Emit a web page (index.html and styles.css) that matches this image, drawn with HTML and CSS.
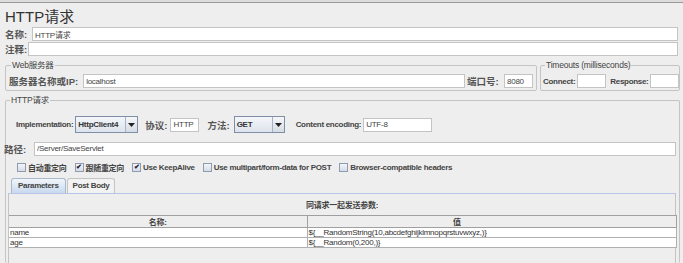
FILE: index.html
```html
<!DOCTYPE html>
<html>
<head>
    <meta charset="utf-8">
    <title>HTTP请求</title>
    <link rel="stylesheet" href="styles.css">
</head>
<body>
    <div class="topbar"></div>
    <h1 class="title">HTTP请求</h1>

    <!-- name / comment -->
    <div class="row name-row">
        <label class="lbl cjk">名称:</label>
        <input class="field grow" type="text" value="HTTP请求">
    </div>
    <div class="row comment-row">
        <label class="lbl cjk">注释:</label>
        <input class="field grow" type="text" value="">
    </div>

    <!-- server + timeouts -->
    <div class="server-line">
        <fieldset class="box web">
            <legend>Web服务器</legend>
            <div class="row">
                <label class="lbl cjk">服务器名称或IP:</label>
                <input class="field grow host" type="text" value="localhost">
                <label class="lbl cjk port-lbl">端口号:</label>
                <input class="field port" type="text" value="8080">
            </div>
        </fieldset>
        <fieldset class="box timeouts">
            <legend>Timeouts (milliseconds)</legend>
            <div class="row">
                <label class="lbl">Connect:</label>
                <input class="field tiny" type="text" value="">
                <label class="lbl resp-lbl">Response:</label>
                <input class="field tiny" type="text" value="">
            </div>
        </fieldset>
    </div>

    <!-- http request -->
    <fieldset class="box http">
        <legend>HTTP请求</legend>

        <div class="row impl-row">
            <label class="lbl">Implementation:</label>
            <div class="combo impl">
                <span class="combo-text">HttpClient4</span>
                <span class="combo-btn">
                    <svg width="7" height="4" viewBox="0 0 7 4"><path d="M0 0h7L3.5 4z" fill="#222"/></svg>
                </span>
            </div>
            <label class="lbl cjk proto-lbl">协议:</label>
            <input class="field proto" type="text" value="HTTP">
            <label class="lbl cjk method-lbl">方法:</label>
            <div class="combo method">
                <span class="combo-text">GET</span>
                <span class="combo-btn">
                    <svg width="7" height="4" viewBox="0 0 7 4"><path d="M0 0h7L3.5 4z" fill="#222"/></svg>
                </span>
            </div>
            <label class="lbl enc-lbl">Content encoding:</label>
            <input class="field enc" type="text" value="UTF-8">
        </div>

        <div class="row path-row">
            <label class="lbl cjk">路径:</label>
            <input class="field grow" type="text" value="/Server/SaveServlet">
        </div>

        <div class="row checks">
            <span class="check"><span class="cb"></span>自动重定向</span>
            <span class="check"><span class="cb on">&#10004;</span>跟随重定向</span>
            <span class="check"><span class="cb on">&#10004;</span>Use KeepAlive</span>
            <span class="check"><span class="cb"></span>Use multipart/form-data for POST</span>
            <span class="check"><span class="cb"></span>Browser-compatible headers</span>
        </div>

        <div class="tabs">
            <span class="tab active">Parameters</span>
            <span class="tab">Post Body</span>
        </div>
        <div class="panel">
            <div class="caption">同请求一起发送参数:</div>
            <table class="params">
                <tr>
                    <th class="col-name">名称:</th>
                    <th class="col-value">值</th>
                </tr>
                <tr>
                    <td>name</td>
                    <td>${__RandomString(10,abcdefghijklmnopqrstuvwxyz,)}</td>
                </tr>
                <tr>
                    <td>age</td>
                    <td>${__Random(0,200,)}</td>
                </tr>
            </table>
        </div>
    </fieldset>
</body>
</html>
```

FILE: styles.css
```css
:root {
    --panel:   #eeeeee;
    --line:    #c4c4c4;
    --text:    #222222;
    --soft:    #444444;
    --blue:    #b8c4e8;
}

* {
    box-sizing: border-box;
}

body {
    margin: 0;
    width: 683px;
    height: 263px;
    overflow: hidden;

    color: var( --text );
    background-color: var( --panel );
    font-family: "Liberation Sans", "Noto Sans CJK SC", sans-serif;
    font-size: 8px;
    letter-spacing: -0.25px;
}

.topbar {
    height: 3px;
    border-bottom: 1px solid #9a9a9a;
    background-color: #dcdcdc;
}

.title {
    margin: 0;
    padding: 5px 0 0 5px;
    height: 24px;

    font-size: 15px;
    line-height: 17px;
    font-weight: normal;
    letter-spacing: 0;
    color: #333;
}

.row {
    display: flex;
    align-items: center;
}

.lbl {
    font-weight: bold;
    letter-spacing: -0.3px;
    color: var( --soft );
    white-space: nowrap;
}

.lbl.cjk {
    font-size: 9.5px;
    letter-spacing: 0;
    color: #555;
}

.field {
    height: 14px;
    padding: 0 2px;

    font-family: inherit;
    font-size: 8px;
    letter-spacing: -0.25px;
    color: var( --soft );

    background: #fff;
    border: 1px solid var( --line );
    outline: none;
}

.grow {
    flex: 1;
    min-width: 0;
}

.name-row {
    padding: 0 5px 0 5px;
    height: 14px;
}

.name-row .lbl {
    width: 27px;
}

.comment-row {
    margin-top: 1px;
    padding: 0 5px 0 5px;
    height: 14px;
}

.comment-row .lbl {
    width: 23px;
}

/* group boxes */
.box {
    margin: 0;
    padding: 0 3px 0 3px;
    border: 1px solid var( --line );
    border-radius: 2px;
    min-width: 0;
}

.box legend {
    padding: 0 1px;
    margin-left: 2px;
    line-height: 10px;
    font-size: 8.5px;
    letter-spacing: -0.2px;
    color: var( --soft );
}

.server-line {
    display: flex;
    gap: 3px;
    margin: 4px 3px 0 5px;
    height: 31px;
}

.web {
    flex: 1;
    padding-bottom: 1px;
}

.web .row {
    margin-top: 4px;
}

.web .host {
    margin-left: 5px;
    margin-right: 2px;
}

.port-lbl {
    width: 37px;
}

.port {
    width: 29px;
}

.timeouts {
    width: 140px;
    padding-left: 2px;
    padding-bottom: 1px;
}

.timeouts .row {
    margin-top: 4px;
}

.tiny {
    width: 29px;
    margin-left: 2px;
}

.resp-lbl {
    margin-left: 4px;
}

.http {
    margin: 4px 3px 0 5px;
    padding: 0 3px 0 2px;
    height: 168px;
    border-bottom: none;
}

.impl-row {
    margin-top: 11px;
    height: 17px;
    padding-left: 8px;
}

.combo {
    display: flex;
    height: 17px;
    margin-left: 2px;

    background: linear-gradient( #f4f6fa, #dde3ec );
    border: 1px solid #7f8fa8;
}

.combo-text {
    flex: 1;
    padding: 0 2px;
    line-height: 15px;
    font-weight: bold;
    color: #333;
}

.combo-btn {
    display: flex;
    align-items: center;
    justify-content: center;
    width: 12px;
    border-left: 1px solid #a8b4c6;
    background: linear-gradient( #f6f7f9, #d5dbe4 );
}

.impl {
    width: 63px;
}

.method {
    width: 51px;
    margin-left: 4px;
}

.proto-lbl {
    margin-left: 7px;
}

.proto {
    width: 29px;
    margin-left: 3px;
}

.method-lbl {
    margin-left: 8px;
}

.enc-lbl {
    margin-left: 11px;
}

.enc {
    width: 69px;
    margin-left: 2px;
}

.path-row {
    margin: 8px 0 0 -4px;
    height: 15px;
}

.path-row .lbl {
    width: 30px;
}

.checks {
    margin-top: 5px;
    padding-left: 9px;
    gap: 8px;
    height: 12px;
}

.check {
    display: flex;
    align-items: center;
    gap: 2px;

    font-weight: bold;
    letter-spacing: -0.3px;
    color: var( --soft );
}

.cb {
    display: inline-flex;
    align-items: center;
    justify-content: center;
    width: 9px;
    height: 9px;

    font-size: 7px;
    color: #223;
    background: linear-gradient( #f2f4f8, #d6dde8 );
    border: 1px solid #8e9bb0;
}

/* tabs */
.tabs {
    display: flex;
    gap: 1px;
    margin: 5px 0 0 3px;
    height: 15px;
}

.tab {
    padding: 0 5px;
    line-height: 14px;

    font-weight: bold;
    letter-spacing: -0.3px;
    color: #444;
    background: #f2f2f2;
    border: 1px solid var( --line );
    border-bottom: none;
    border-radius: 3px 3px 0 0;
}

.tab.active {
    padding: 0 6px;
    background: linear-gradient( #f2f6fb, #c8d8ee );
    border-color: #aab8cc;
}

.panel {
    height: 80px;
    border-top: 1px solid var( --blue );
    border-left: 1px solid var( --line );
    border-right: 1px solid var( --line );
}

.caption {
    padding-top: 7px;
    height: 21px;
    line-height: 10px;
    text-align: center;
    font-weight: bold;
    color: #444;
}

.params {
    width: 668px;
    border-collapse: collapse;
    font-size: 8px;
}

.params th {
    height: 12px;
    padding: 0;

    font-weight: bold;
    color: #444;
    background: #eeeeee;
    border: 1px solid #a0a0a0;
    border-left: none;
}

.params td {
    height: 10px;
    padding: 0 1px;
    line-height: 8px;

    color: #333;
    background: #fff;
    border: 1px solid #b0b0b0;
    border-left: none;
}

.col-name {
    width: 298px;
}

.col-value {
    padding-right: 70px !important;
}
```
